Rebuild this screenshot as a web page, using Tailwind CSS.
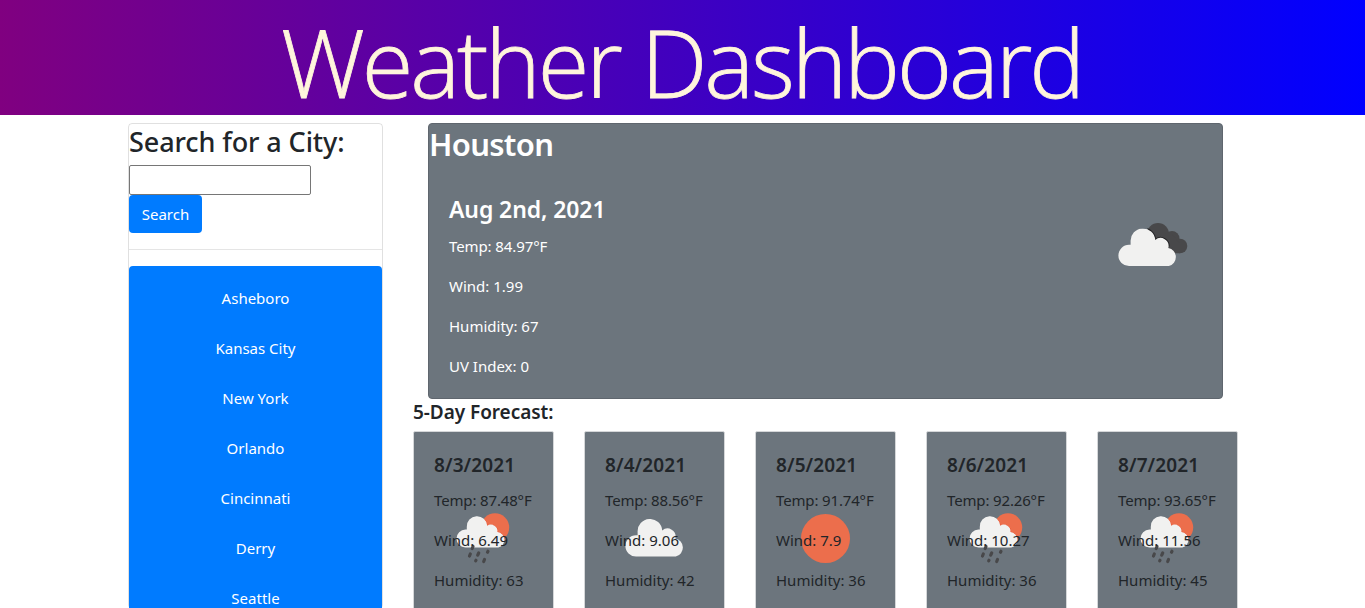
<!DOCTYPE html>
<html lang="en">
<head>
<meta charset="utf-8">
<title>Weather Dashboard</title>
<script src="https://cdn.jsdelivr.net/npm/@tailwindcss/browser@4"></script>
</head>
<body class="h-[608px] overflow-hidden bg-white font-['Noto_Sans','Open_Sans',sans-serif] text-base text-[#212529]">
<svg class="hidden">
  <symbol id="cloud" viewBox="0 0 60 38"><path d="M11 37.5a10.6 10.6 0 0 1 0-21.2h1.6V13a12.3 12.3 0 0 1 24.6-1.4A8 8 0 0 1 50.300 19.500A9.200 9.200 0 0 1 50.800 37.5Z" fill="#f1f1f0"/></symbol>
  <symbol id="rain" viewBox="0 0 54 52">
    <circle cx="39" cy="14.5" r="14.2" fill="#ec6e4c"/>
    <path d="M9.500 34.500a9 9 0 0 1 0-18h1.300v-2.500a10.200 10.200 0 0 1 20.400-1.200a6.600 6.600 0 0 1 10.200 6.300a7.800 7.800 0 0 1 .8 15.400Z" fill="#f1f1f0" stroke="#e8502f" stroke-width="1" class="[clip-path:circle(14.2px_at_39px_14.5px)]"/>
    <path d="M9.500 34.500a9 9 0 0 1 0-18h1.300v-2.500a10.200 10.200 0 0 1 20.400-1.200a6.600 6.600 0 0 1 10.200 6.300a7.800 7.800 0 0 1 .8 15.400Z" fill="#f1f1f0"/>
    <path d="M17 33.500l-.8 2M14.300 41l-.8 2M22.700 40l-1 2.200M32 38.300l-.5.9M20 47.300l-.3.5M28.500 46.500l-.8 2" stroke="#48484a" stroke-width="3.2" stroke-linecap="round"/>
  </symbol>
</svg>
<header class="h-[115px] bg-linear-to-r/srgb from-[#800080] to-[#0000ff] text-center">
  <h1 class="pr-0.5 font-['Open_Sans','Noto_Sans',sans-serif] text-[94px] leading-[124px] font-light tracking-[-3.100px] text-[#fff5dc] [-webkit-text-stroke:0.8px_#fff5dc]">Weather Dashboard</h1>
</header>
<main class="flex pt-2 pl-32">
  <aside class="w-[255px] shrink-0 rounded border border-black/12">
    <h3 class="mb-[6px] text-[27px] leading-[35px] font-medium tracking-[-0.100px] whitespace-nowrap">Search for a City:</h3>
    <input class="block h-[30px] w-[182px] rounded-xs border border-[#767676] bg-white">
    <button class="block h-[38px] w-[73px] rounded bg-[#007bff] text-[15px] text-white">Search</button>
    <hr class="my-4 border-black/10">
    <div class="flex h-[342px] flex-col overflow-hidden rounded-t bg-[#007bff] pt-[7px] text-center text-[15px] text-white">
      <p class="h-[50px] shrink-0 leading-[50px]">Asheboro</p>
      <p class="h-[50px] shrink-0 leading-[50px]">Kansas City</p>
      <p class="h-[50px] shrink-0 leading-[50px]">New York</p>
      <p class="h-[50px] shrink-0 leading-[50px]">Orlando</p>
      <p class="h-[50px] shrink-0 leading-[50px]">Cincinnati</p>
      <p class="h-[50px] shrink-0 leading-[50px]">Derry</p>
      <p class="h-[50px] shrink-0 leading-[50px]">Seattle</p>
    </div>
  </aside>
  <section class="ml-[30px] w-[826px] shrink-0">
    <div class="ml-[15px] flex h-[276px] w-[795px] flex-col rounded border border-[#5f666e] bg-[#6c757d] text-white">
      <h2 class="mb-0.5 text-[31px] leading-[40px] font-semibold tracking-[-0.700px]">Houston</h2>
      <div class="flex grow justify-between pr-[34px] pl-5">
        <div class="pt-[27px]">
          <h4 class="text-[23px] leading-8 font-semibold tracking-[-0.100px]">Aug 2nd, 2021</h4>
          <div class="mt-[9px] flex flex-col gap-4 text-[15px] leading-6">
            <p class="tracking-[-0.100px]">Temp: 84.97°F</p><p>Wind: 1.99</p><p>Humidity: 67</p><p>UV Index: 0</p>
          </div>
        </div>
        <svg class="mt-[56px] h-[46px] w-[70px]" viewBox="0 0 70 46"><g fill="#48484a"><circle cx="40" cy="12" r="11"/><circle cx="54" cy="16.500" r="7.500"/><circle cx="62" cy="24" r="7.300"/><path d="M38 12h16l8 10v9.200h-14z"/></g><path transform="translate(0 6.500)" d="M11 37.5a10.6 10.6 0 0 1 0-21.2h1.6V13a12.3 12.3 0 0 1 24.6-1.4A8 8 0 0 1 50.300 19.500A9.200 9.200 0 0 1 59.700 28z" fill="#f1f1f0" stroke="#242426" stroke-width="2" class="[clip-path:polygon(30px_0px,70px_0px,70px_23px,30px_14px)]"/><use href="#cloud" y="6.500" width="60" height="38"/></svg>
      </div>
    </div>
    <h5 class="h-8 text-[19px] leading-[27px] font-semibold tracking-[-0.060px]">5-Day Forecast:</h5>
    <div class="flex h-[177px] gap-[30px] overflow-hidden text-[15px] leading-6 font-normal">
      <article class="relative h-[200px] w-[141px] rounded-xs border border-[#d5d7d9] bg-[#6c757d] pt-[21px] pl-5 whitespace-nowrap">
        <svg class="absolute top-[81px] left-[42px] h-[52px] w-[54px]"><use href="#rain"/></svg>
        <h5 class="relative mb-[11px] text-[19px] leading-6 font-semibold tracking-[0.1px]">8/3/2021</h5>
        <div class="relative flex flex-col gap-4"><p class="tracking-[-0.150px]">Temp: 87.48°F</p><p>Wind: 6.49</p><p>Humidity: 63</p></div>
      </article>
      <article class="relative h-[200px] w-[141px] rounded-xs border border-[#d5d7d9] bg-[#6c757d] pt-[21px] pl-5 whitespace-nowrap">
        <svg class="absolute top-[87px] left-10 h-[38px] w-[60px]"><use href="#cloud"/></svg>
        <h5 class="relative mb-[11px] text-[19px] leading-6 font-semibold tracking-[0.1px]">8/4/2021</h5>
        <div class="relative flex flex-col gap-4"><p class="tracking-[-0.150px]">Temp: 88.56°F</p><p>Wind: 9.06</p><p>Humidity: 42</p></div>
      </article>
      <article class="relative h-[200px] w-[141px] rounded-xs border border-[#d5d7d9] bg-[#6c757d] pt-[21px] pl-5 whitespace-nowrap">
        <div class="absolute top-[82px] left-[45px] size-[49px] rounded-full bg-[#ec6e4c]"></div>
        <h5 class="relative mb-[11px] text-[19px] leading-6 font-semibold tracking-[0.1px]">8/5/2021</h5>
        <div class="relative flex flex-col gap-4"><p class="tracking-[-0.150px]">Temp: 91.74°F</p><p>Wind: 7.9</p><p>Humidity: 36</p></div>
      </article>
      <article class="relative h-[200px] w-[141px] rounded-xs border border-[#d5d7d9] bg-[#6c757d] pt-[21px] pl-5 whitespace-nowrap">
        <svg class="absolute top-[81px] left-[42px] h-[52px] w-[54px]"><use href="#rain"/></svg>
        <h5 class="relative mb-[11px] text-[19px] leading-6 font-semibold tracking-[0.1px]">8/6/2021</h5>
        <div class="relative flex flex-col gap-4"><p class="tracking-[-0.150px]">Temp: 92.26°F</p><p>Wind: 10.27</p><p>Humidity: 36</p></div>
      </article>
      <article class="relative h-[200px] w-[141px] rounded-xs border border-[#d5d7d9] bg-[#6c757d] pt-[21px] pl-5 whitespace-nowrap">
        <svg class="absolute top-[81px] left-[42px] h-[52px] w-[54px]"><use href="#rain"/></svg>
        <h5 class="relative mb-[11px] text-[19px] leading-6 font-semibold tracking-[0.1px]">8/7/2021</h5>
        <div class="relative flex flex-col gap-4"><p class="tracking-[-0.150px]">Temp: 93.65°F</p><p>Wind: 11.56</p><p>Humidity: 45</p></div>
      </article>
    </div>
  </section>
</main>
</body>
</html>
